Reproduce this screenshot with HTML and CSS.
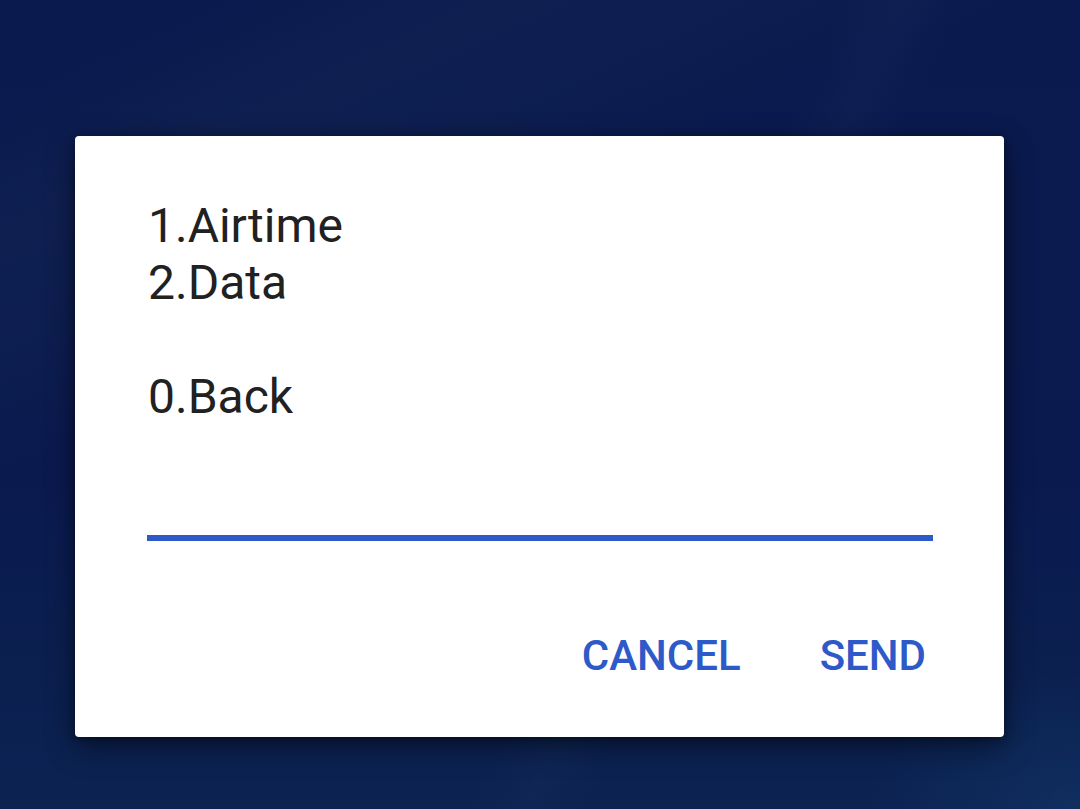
FILE: index.html
```html
<!DOCTYPE html>
<html lang="en">
<head>
<meta charset="utf-8">
<title>USSD dialog</title>
<link rel="stylesheet" href="styles.css">
</head>
<body>
<div class="screen">
  <div class="dialog">
    <div class="message">
      <div class="line">1.Airtime</div>
      <div class="line">2.Data</div>
      <div class="line">&nbsp;</div>
      <div class="line">0.Back</div>
    </div>
    <div class="input"></div>
    <div class="actions">
      <span class="btn">CANCEL</span>
      <span class="btn">SEND</span>
    </div>
  </div>
</div>
</body>
</html>
```
FILE: styles.css
```css
html, body {
  margin: 0;
  padding: 0;
}
body {
  width: 1080px;
  height: 809px;
  overflow: hidden;
  font-family: Roboto, "Noto Sans", sans-serif;
}
.screen {
  width: 1080px;
  height: 809px;
  box-sizing: border-box;
  padding: 136px 76px 0 75px;
  background:
    linear-gradient(155deg, rgba(30, 50, 90, 0) 8%, rgba(30, 50, 90, 0.22) 18%, rgba(30, 50, 90, 0.12) 28%, rgba(30, 50, 90, 0) 36%),
    linear-gradient(115deg, rgba(40, 60, 110, 0) 58%, rgba(40, 60, 110, 0.12) 62%, rgba(40, 60, 110, 0) 66%),
    radial-gradient(ellipse 300px 200px at 1080px 809px, rgba(20, 60, 110, 0.45), rgba(20, 60, 110, 0) 70%),
    linear-gradient(180deg, #0b1a4e 0%, #0a1a4f 60%, #0b1f4f 80%, #0c2352 100%);
}
.dialog {
  width: 929px;
  height: 601px;
  box-sizing: border-box;
  background: #ffffff;
  border-radius: 4px;
  box-shadow: 0 10px 30px rgba(0, 0, 0, 0.45), 0 2px 8px rgba(0, 0, 0, 0.3);
  padding: 61px 71px 0 72px;
  display: flex;
  flex-direction: column;
}
.message {
  padding-left: 1px;
  color: #212121;
  font-size: 48px;
  line-height: 57px;
}
.input {
  margin-top: 110px;
  height: 6px;
  background: #2d5ac8;
}
.actions {
  margin-top: 90px;
  display: flex;
  justify-content: flex-end;
  gap: 79px;
  padding-right: 7px;
}
.btn {
  color: #2d5ac8;
  font-size: 42px;
  font-weight: 500;
  line-height: 49px;
}
```
